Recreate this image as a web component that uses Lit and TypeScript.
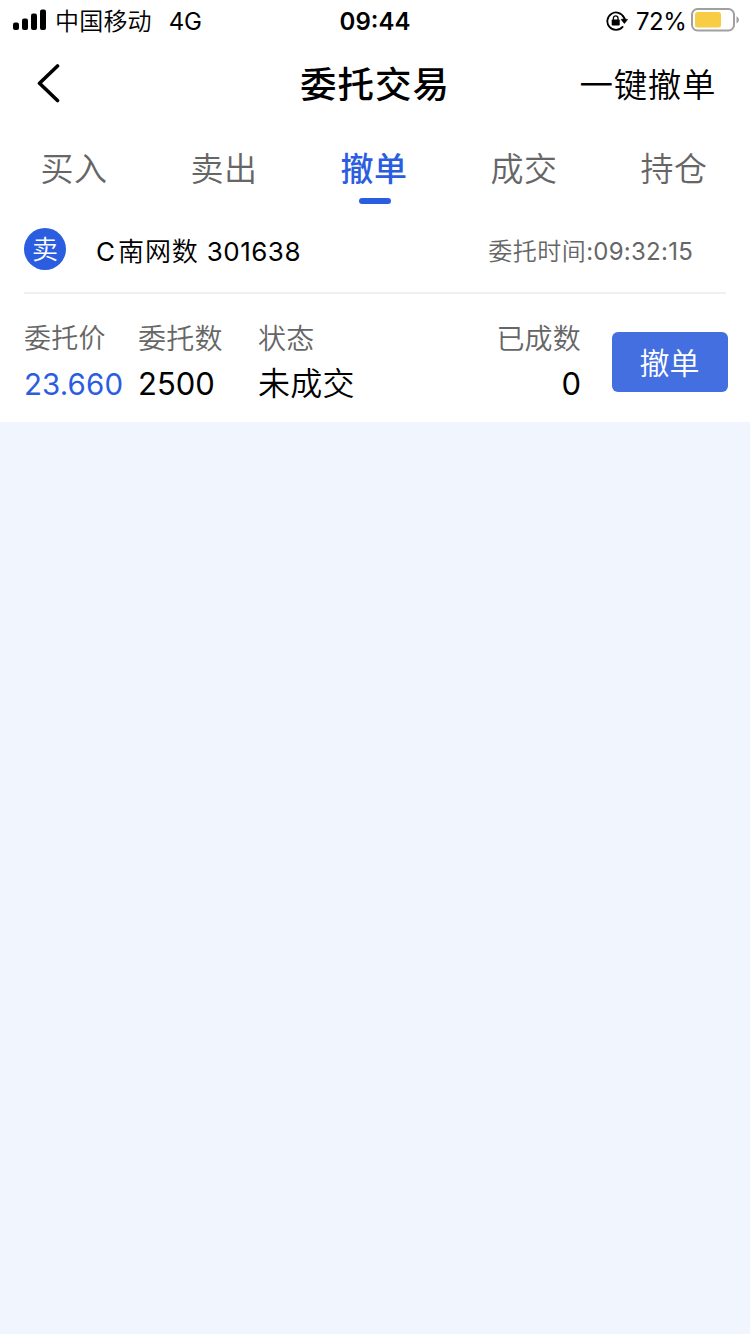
import { LitElement, html, css } from "lit";
import { customElement, state } from "lit/decorators.js";

const TABS = ["买入", "卖出", "撤单", "成交", "持仓"];

@customElement("status-bar")
class StatusBar extends LitElement {
  static styles = css`
    :host {
      display: grid;
      grid-template-columns: 1fr auto 1fr;
      align-items: center;
      height: 40px;
      padding: 0 11px 0 13px;
      font-size: 24px;
      line-height: 40px;
      white-space: nowrap;
    }
    svg { display: block; flex: none; }
    .left, .right { display: flex; align-items: center; }
    .right { justify-content: flex-end; }
    span, .time { padding-top: 4px; line-height: 36px; }
    .carrier { margin-left: 9px; letter-spacing: 0.2px; font-weight: 350; }
    .network { margin-left: 17px; letter-spacing: -0.3px; }
    .time { font-weight: 600; letter-spacing: 0; margin-left: -2px; }
    .percent { margin: 0 4.5px 0 8px; letter-spacing: -0.4px; }
  `;
  render() {
    return html`
      <div class="left">
        <svg width="33" height="22" viewBox="0 0 33 22">
          <rect x="0" y="13.5" width="6" height="7.5" rx="2" />
          <rect x="9" y="9.5" width="6" height="11.5" rx="2" />
          <rect x="18" y="4.5" width="6" height="16.5" rx="2" />
          <rect x="27" y="0.5" width="6" height="20.5" rx="2" />
        </svg>
        <span class="carrier">中国移动</span>
        <span class="network">4G</span>
      </div>
      <div class="time">09:44</div>
      <div class="right">
        <svg width="22" height="22" viewBox="0 -1.5 22 22">
          <path d="M16.6 16.4A8.7 8.7 0 1 1 17.9 7" fill="none" stroke="#000" stroke-width="1.8" stroke-linecap="round" />
          <path d="M15 8.9L17.4 8.6L18.4 6.4L19.5 8.6L21.6 9L18.4 13Z" stroke="#000" stroke-width=".6" stroke-linejoin="round" />
          <rect x="5.7" y="9" width="8" height="6" rx=".8" />
          <path d="M7.4 9.4V7.6a2.3 2.3 0 0 1 4.6 0V9.4" fill="none" stroke="#000" stroke-width="1.3" />
        </svg>
        <span class="percent">72%</span>
        <svg width="48" height="24" viewBox="0 0 48 24">
          <rect x="1" y="1" width="42" height="21.5" rx="5.5" fill="none" stroke="#a0a0a0" stroke-width="2" />
          <rect x="4" y="4" width="26" height="15.5" rx="2.5" fill="#f6cd45" />
          <path d="M45.5 8.2Q48 9.5 48 11.8T45.5 15.4Z" fill="#a0a0a0" />
        </svg>
      </div>
    `;
  }
}

@customElement("nav-header")
class NavHeader extends LitElement {
  static styles = css`
    :host {
      display: grid;
      grid-template-columns: 1fr auto 1fr;
      align-items: center;
      height: 86px;
      padding: 0 34px 0 36px;
      white-space: nowrap;
    }
    svg { display: block; }
    .title {
      font-size: 36.5px;
      font-weight: 500;
      letter-spacing: 1px;
      line-height: 82px;
      padding-top: 4px;
      margin-left: -2px;
    }
    .action {
      justify-self: end;
      font-size: 33.5px;
      font-weight: 350;
      letter-spacing: 0.6px;
      line-height: 82px;
      padding-top: 4px;
    }
  `;
  render() {
    return html`
      <svg width="26" height="40" viewBox="0 0 26 40">
        <path d="M21.5 3L3.5 20.2L21.5 37.5" fill="none" stroke="#000" stroke-width="3.6" stroke-linecap="round" stroke-linejoin="round" />
      </svg>
      <div class="title">委托交易</div>
      <div class="action">一键撤单</div>
    `;
  }
}

@customElement("trade-tabs")
class TradeTabs extends LitElement {
  static styles = css`
    :host { display: grid; grid-template-columns: repeat(5, 1fr); height: 82px; }
    .tab {
      display: flex;
      flex-direction: column;
      align-items: center;
      font-size: 33px;
      font-weight: 350;
      line-height: 72px;
      color: #666;
      padding-top: 7px;
      box-sizing: border-box;
    }
    .tab span { margin-left: -2px; letter-spacing: 0.6px; }
    .active { color: #2b5de0; font-weight: 500; }
    .active::after {
      content: "";
      width: 32px;
      height: 6px;
      border-radius: 3px;
      background: #2b5de0;
      margin-top: -7px;
    }
  `;
  @state() private selected = 2;
  render() {
    return TABS.map((name, i) => html`
      <div class="tab ${i === this.selected ? "active" : ""}" @click=${() => (this.selected = i)}><span>${name}</span></div>
    `);
  }
}

@customElement("order-card")
class OrderCard extends LitElement {
  static styles = css`
    :host { display: block; white-space: nowrap; }
    .head {
      display: flex;
      align-items: center;
      height: 82px;
      margin: 0 24px;
      padding-bottom: 2px;
      border-bottom: 2px solid #f0f0f0;
    }
    .badge {
      width: 42px;
      height: 42px;
      border-radius: 50%;
      background: #2b5de0;
      color: #fff;
      font-size: 26px;
      font-weight: 350;
      line-height: 44px;
      text-align: center;
    }
    .name { display: flex; align-items: center; margin-left: 30px; font-size: 26px; line-height: 42px; padding-top: 5px; }
    .stock { font-weight: 350; letter-spacing: 0.9px; margin: 0 8px 0 3px; }
    .code { font-size: 26px; letter-spacing: 0.5px; }
    .when { margin-left: auto; margin-right: 33px; font-size: 24px; color: #666; line-height: 40px; padding-top: 5px; }
    .when-label { font-weight: 350; letter-spacing: 0.5px; }
    .when-time { letter-spacing: 0.25px; }
    .body {
      display: grid;
      grid-template-columns: 114px 120px 1fr auto 116px;
      height: 128px;
      padding: 0 22px 0 24px;
      align-items: start;
    }
    .col { padding-top: 23px; }
    .label { font-size: 28px; font-weight: 350; line-height: 44px; letter-spacing: 0.2px; color: #666; }
    .narrow { font-size: 27px; letter-spacing: 0.2px; }
    .value { font-size: 31px; line-height: 46px; }
    .text { font-size: 32px; font-weight: 350; letter-spacing: 0.2px; }
    .price { color: #2b5de0; font-size: 29.5px; letter-spacing: 0.1px; }
    .right { text-align: right; margin-right: 31px; }
    .cancel {
      margin-top: 38px;
      height: 60px;
      border-radius: 6px;
      background: #436fe0;
      color: #fff;
      font-size: 30px;
      font-weight: 350;
      line-height: 62px;
      text-align: center;
      text-indent: -1px;
    }
  `;
  render() {
    return html`
      <div class="head">
        <div class="badge">卖</div>
        <div class="name"><span>C</span><span class="stock">南网数</span><span class="code">301638</span></div>
        <div class="when"><span class="when-label">委托时间</span><span class="when-time">:09:32:15</span></div>
      </div>
      <div class="body">
        <div class="col"><div class="label narrow">委托价</div><div class="value price">23.660</div></div>
        <div class="col"><div class="label">委托数</div><div class="value">2500</div></div>
        <div class="col"><div class="label">状态</div><div class="value text">未成交</div></div>
        <div class="col right"><div class="label">已成数</div><div class="value">0</div></div>
        <div class="cancel">撤单</div>
      </div>
    `;
  }
}

@customElement("app-root")
class AppRoot extends LitElement {
  static styles = css`
    :host {
      display: block;
      width: 750px;
      height: 1334px;
      overflow: hidden;
      background: #f1f5fe;
      color: #000;
      font-family: Inter, "Noto Sans CJK SC", sans-serif;
    }
    .panel { background: #fff; }
  `;
  render() {
    return html`
      <div class="panel">
        <status-bar></status-bar>
        <nav-header></nav-header>
        <trade-tabs></trade-tabs>
        <order-card></order-card>
      </div>
    `;
  }
}
